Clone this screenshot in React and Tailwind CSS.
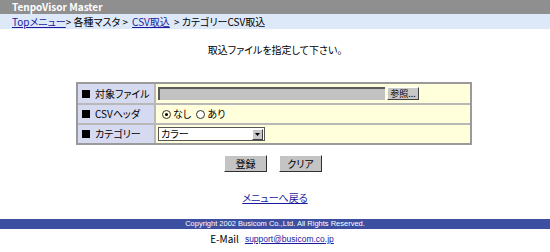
import React from "react";

const jp = { fontFamily: '"Noto Sans CJK JP", "Noto Sans", sans-serif' };

function Label({ children }) {
  return (
    <div className="flex items-center gap-[5px] whitespace-nowrap bg-[#d6daf0] pl-[4px] text-[10px] leading-none text-black">
      <span className="inline-block h-[8px] w-[8px] bg-black" />
      <span>{children}</span>
    </div>
  );
}

export default function App() {
  return (
    <div className="h-[252px] w-[550px] overflow-hidden bg-white [font-feature-settings:'palt']" style={jp}>
      {/* title bar */}
      <div className="flex h-[14px] items-center bg-[#8f8f8f] pl-[12px]">
        <span className="text-[10px] font-bold leading-none text-white">TenpoVisor Master</span>
      </div>

      {/* breadcrumb */}
      <div className="flex h-[15px] items-center whitespace-nowrap bg-[#dde9f9] pl-[12px] text-[10px] leading-none text-black">
        <a className="text-[#1a1aa0] underline">Topメニュー</a>
        <span>&gt; 各種マスタ &gt;</span>
        <a className="ml-[4px] text-[#1a1aa0] underline">CSV取込</a>
        <span className="ml-[4px]">&gt; カテゴリーCSV取込</span>
      </div>

      <p className="mt-[15px] text-center text-[10px] leading-[12px] text-black">取込ファイルを指定して下さい。</p>

      {/* form table */}
      <div className="ml-[76px] mt-[26px] w-[396px] border-2 border-[#9a9a9a] bg-[#b8b8b8]">
        <div className="grid grid-cols-[76px_1fr] gap-[2px]">
          <Label>対象ファイル</Label>
          <div className="flex h-[19px] items-center gap-[2px] bg-[#ffffdc] pl-[2px]">
            <div className="h-[13px] w-[227px] border-t-2 border-l-2 border-[#5a5a5a] bg-[#c2c2c2]" />
            <button className="flex h-[13px] w-[32px] items-center justify-center border border-b-[#404040] border-l-white border-r-[#404040] border-t-white bg-[#c8c8c8] text-[9px] leading-none text-black">
              参照...
            </button>
          </div>
          <Label>CSVヘッダ</Label>
          <div className="flex h-[18px] items-center gap-[5px] bg-[#ffffdc] pl-[6px] text-[10px] leading-none text-black">
            <span className="flex items-center gap-[2px]">
              <span className="flex h-[9px] w-[9px] items-center justify-center rounded-full border border-[#333]">
                <span className="h-[3px] w-[3px] rounded-full bg-black" />
              </span>
              なし
            </span>
            <span className="flex items-center gap-[2px]">
              <span className="h-[9px] w-[9px] rounded-full border border-[#333] bg-white" />
              あり
            </span>
          </div>
          <Label>カテゴリー</Label>
          <div className="flex h-[18px] items-center bg-[#ffffdc] pl-[2px]">
            <div className="flex h-[14px] w-[107px] items-center justify-between border border-[#555] bg-white pl-[2px] text-[10px] text-black">
              <span className="leading-none">カラー</span>
              <span className="mr-[1px] flex h-[11px] w-[11px] items-center justify-center border border-b-[#404040] border-l-white border-r-[#404040] border-t-white bg-[#c8c8c8]">
                <svg width="5" height="3" viewBox="0 0 5 3"><path d="M0 0h5L2.5 3z" fill="#000" /></svg>
              </span>
            </div>
          </div>
        </div>
      </div>

      {/* buttons */}
      <div className="mt-[10px] flex justify-center gap-[12px] pr-[4px]">
        <button className="flex h-[17px] w-[43px] items-center justify-center border border-b-[#303030] border-l-white border-r-[#303030] border-t-white bg-[#c4c4c4] text-[10px] leading-none text-black">
          登録
        </button>
        <button className="flex h-[17px] w-[43px] items-center justify-center border border-b-[#303030] border-l-white border-r-[#303030] border-t-white bg-[#c4c4c4] text-[10px] leading-none text-black">
          クリア
        </button>
      </div>

      <div className="mt-[20px] text-center text-[10px] leading-[12px]">
        <a className="text-[#1a1aa0] underline">メニューへ戻る</a>
      </div>

      {/* footer */}
      <div className="mt-[15px] flex h-[10px] items-center justify-center bg-[#3c4fa0]">
        <span className="text-[7.5px] leading-none text-white" style={{ fontFamily: '"Liberation Sans", Arial, sans-serif' }}>
          Copyright 2002 Busicom Co.,Ltd. All Rights Reserved.
        </span>
      </div>
      <div className="mt-[4px] flex justify-center gap-[6px] pr-[6px] text-[10px] leading-[12px] text-black">
        <span>E-Mail</span>
        <a className="text-[8.5px] text-[#1a1aa0] underline" style={{ fontFamily: '"Liberation Sans", Arial, sans-serif' }}>
          support@busicom.co.jp
        </a>
      </div>
    </div>
  );
}
